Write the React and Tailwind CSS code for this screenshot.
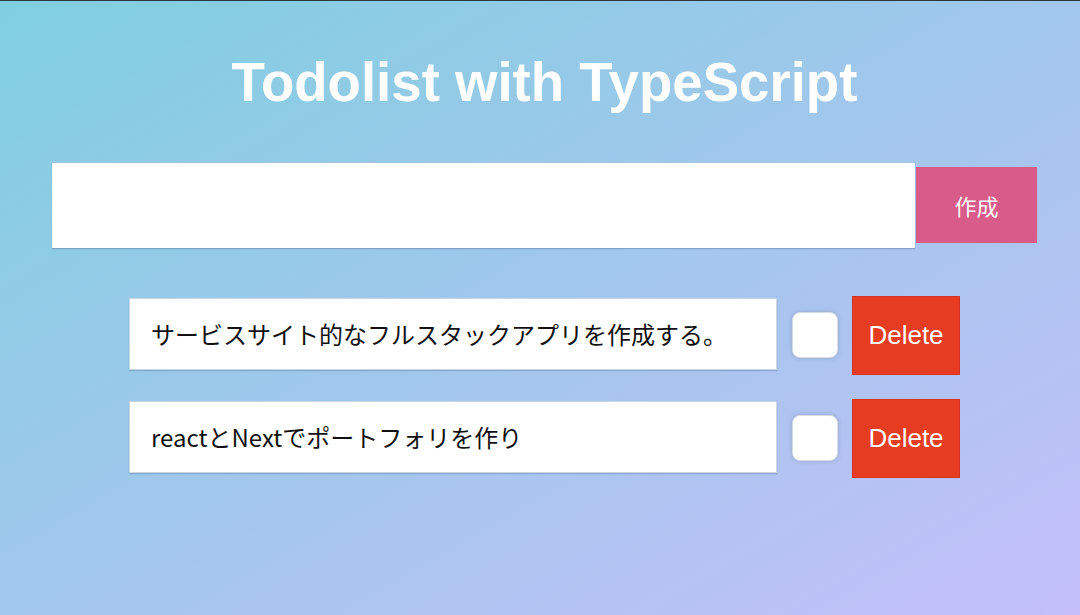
import React from "react";

const todos = [
  "サービスサイト的なフルスタックアプリを作成する。",
  "reactとNextでポートフォリを作り",
];

function TodoRow({ text }) {
  return (
    <div className="flex items-start h-[79px]">
      <div className="mt-[2px] w-[648px] h-[72px] bg-white border border-[#c9d6e4] shadow-[0_1px_1px_rgba(80,110,150,0.35)] flex items-center pl-[21px] text-[24px] text-[#111] [font-family:'Noto_Sans_CJK_JP','Liberation_Sans',sans-serif]">
        {text}
      </div>
      <div className="mt-[16px] ml-[15px] w-[46px] h-[46px] bg-white rounded-[8px] border border-[#d6dbe4] shadow-[0_0_4px_rgba(120,130,150,0.45)]" />
      <button className="ml-[14px] w-[108px] h-[79px] bg-[#e63c22] border border-[#d8331c] text-white text-[26px] [font-family:'Liberation_Sans',sans-serif] flex items-center justify-center">
        Delete
      </button>
    </div>
  );
}

export default function App() {
  return (
    <div className="w-full h-[615px] overflow-hidden bg-[linear-gradient(to_bottom_right,#7fcfdf,#c4bff9)] relative">
      <div className="h-[1px] bg-[#2c3840]" />
      <h1 className="mt-[55px] pl-[9px] text-center text-white font-bold text-[54.6px] leading-[54px] [font-family:'Liberation_Sans',Arial,sans-serif]">
        Todolist with TypeScript
      </h1>
      <div className="mt-[52px] ml-[52px] flex items-center">
        <div className="w-[863px] h-[86px] bg-white border-t border-[#a9c4dc] shadow-[0_1px_1px_rgba(80,110,150,0.4)]" />
        <button className="ml-[1px] w-[121px] h-[76px] bg-[#d85b89] text-white text-[22px] [font-family:'Noto_Sans_CJK_JP',sans-serif] flex items-center justify-center">
          作成
        </button>
      </div>
      <div className="mt-[48px] ml-[129px] flex flex-col gap-[24px]">
        {todos.map((t) => (
          <TodoRow key={t} text={t} />
        ))}
      </div>
    </div>
  );
}
